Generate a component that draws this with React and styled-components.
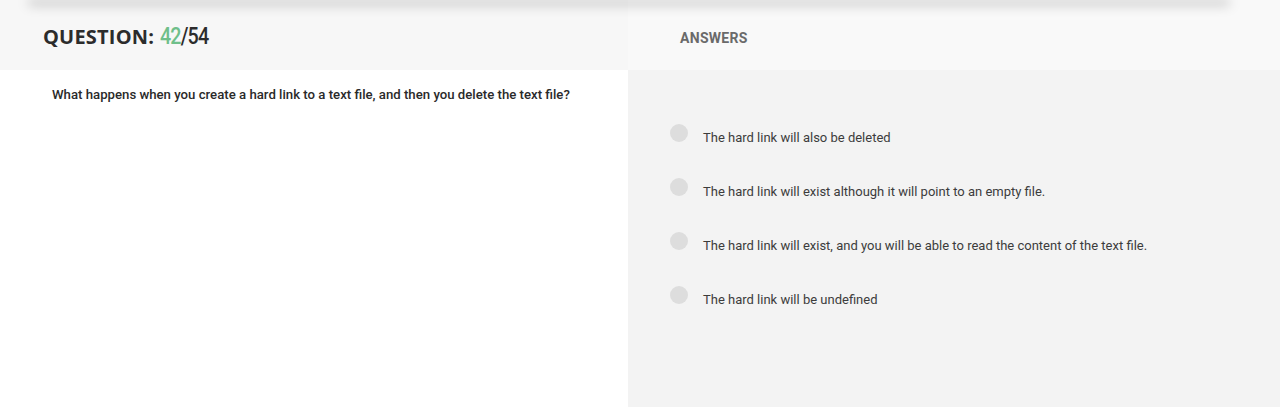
import React from 'react';
import styled, { createGlobalStyle } from 'styled-components';

const GlobalStyle = createGlobalStyle`
  html, body {
    margin: 0;
    padding: 0;
    background: #f8f8f8;
    font-family: Roboto, "Liberation Sans", sans-serif;
  }
`;

const Page = styled.div`
  width: 1280px;
  height: 407px;
  overflow: hidden;
  background: #f8f8f8;
  display: flex;
  flex-direction: column;
`;

const TopCard = styled.div`
  position: relative;
  z-index: 2;
  height: 1px;
  margin: -1px 52px 0 30px;
  background: #f0f0f0;
  border-radius: 0 0 8px 8px;
  box-shadow: 0 3px 12px 2px rgba(0, 0, 0, 0.26);
`;

const Columns = styled.div`
  flex: 1;
  display: grid;
  grid-template-columns: 628px 1fr;
`;

const Column = styled.section`
  display: flex;
  flex-direction: column;
`;

const Header = styled.div`
  height: 70px;
  display: flex;
  align-items: center;
  padding-left: ${p => p.$indent}px;
  background: ${p => p.$bg};
`;

const Title = styled.h1`
  margin: 0;
  font-family: "Open Sans", "DejaVu Sans", sans-serif;
  font-weight: 700;
  font-size: 20px;
  letter-spacing: 0.2px;
  color: #2c2c2c;
  display: flex;
  align-items: baseline;
  gap: 6px;
  padding-top: 2px;
`;

const Count = styled.span`
  font-family: Roboto, "Liberation Sans", sans-serif;
  font-weight: 500;
  font-size: 24px;
  letter-spacing: -1px;
  transform: scaleX(0.82);
  transform-origin: left center;
  color: #2c2c2c;
`;

const Current = styled.span`
  color: #6fbf8a;
`;

const Label = styled.h2`
  margin: 0;
  padding-top: 6px;
  font-family: Roboto, "Liberation Sans", sans-serif;
  font-weight: 700;
  font-size: 14px;
  color: #6a6a6a;
  letter-spacing: 0.3px;
`;

const QuestionBody = styled.div`
  flex: 1;
  background: #ffffff;
  padding: 17px 0 0 52px;
`;

const QuestionText = styled.p`
  margin: 0;
  font-family: Roboto, "Liberation Sans", sans-serif;
  font-weight: 500;
  font-size: 13.2px;
  color: #2a2a2a;
`;

const AnswerBody = styled.div`
  flex: 1;
  background: #f3f3f3;
  padding: 54px 0 0 42px;
  display: flex;
  flex-direction: column;
  gap: 36px;
`;

const Option = styled.label`
  display: flex;
  align-items: flex-start;
  gap: 15px;
  height: 18px;
  cursor: pointer;
`;

const Radio = styled.span`
  width: 18px;
  height: 18px;
  border-radius: 50%;
  background: #dddddd;
  flex-shrink: 0;
`;

const OptionText = styled.span`
  font-family: Roboto, "Liberation Sans", sans-serif;
  font-size: 13px;
  color: #3c3c3c;
  padding-top: 6px;
`;

const answers = [
  'The hard link will also be deleted',
  'The hard link will exist although it will point to an empty file.',
  'The hard link will exist, and you will be able to read the content of the text file.',
  'The hard link will be undefined',
];

export default function App() {
  return (
    <Page>
      <GlobalStyle />
      <TopCard />
      <Columns>
        <Column>
          <Header $indent={43} $bg="#f7f7f7">
            <Title>
              QUESTION:
              <Count><Current>42</Current>/54</Count>
            </Title>
          </Header>
          <QuestionBody>
            <QuestionText>
              What happens when you create a hard link to a text file, and then you delete the text file?
            </QuestionText>
          </QuestionBody>
        </Column>
        <Column>
          <Header $indent={52} $bg="#f9f9f9">
            <Label>ANSWERS</Label>
          </Header>
          <AnswerBody>
            {answers.map((a, i) => (
              <Option key={i}>
                <Radio />
                <OptionText>{a}</OptionText>
              </Option>
            ))}
          </AnswerBody>
        </Column>
      </Columns>
    </Page>
  );
}
